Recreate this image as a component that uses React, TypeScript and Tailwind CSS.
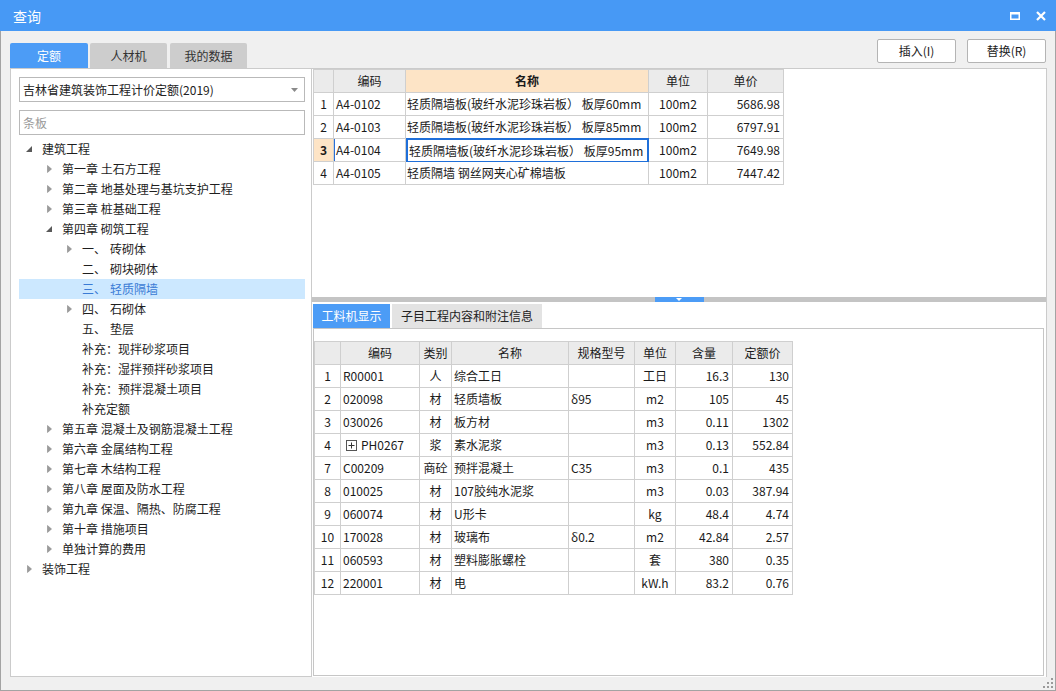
import React from 'react';

type TreeItem = { lvl: number; st?: 'open' | 'closed'; a: string; b?: string; sel?: boolean };

const tree: TreeItem[] = [
  { lvl: 0, st: 'open', a: '建筑工程' },
  { lvl: 1, st: 'closed', a: '第一章 土石方工程' },
  { lvl: 1, st: 'closed', a: '第二章 地基处理与基坑支护工程' },
  { lvl: 1, st: 'closed', a: '第三章 桩基础工程' },
  { lvl: 1, st: 'open', a: '第四章 砌筑工程' },
  { lvl: 2, st: 'closed', a: '一、', b: '砖砌体' },
  { lvl: 2, a: '二、', b: '砌块砌体' },
  { lvl: 2, a: '三、', b: '轻质隔墙', sel: true },
  { lvl: 2, st: 'closed', a: '四、', b: '石砌体' },
  { lvl: 2, a: '五、', b: '垫层' },
  { lvl: 2, a: '补充：现拌砂浆项目' },
  { lvl: 2, a: '补充：湿拌预拌砂浆项目' },
  { lvl: 2, a: '补充：预拌混凝土项目' },
  { lvl: 2, a: '补充定额' },
  { lvl: 1, st: 'closed', a: '第五章 混凝土及钢筋混凝土工程' },
  { lvl: 1, st: 'closed', a: '第六章 金属结构工程' },
  { lvl: 1, st: 'closed', a: '第七章 木结构工程' },
  { lvl: 1, st: 'closed', a: '第八章 屋面及防水工程' },
  { lvl: 1, st: 'closed', a: '第九章 保温、隔热、防腐工程' },
  { lvl: 1, st: 'closed', a: '第十章 措施项目' },
  { lvl: 1, st: 'closed', a: '单独计算的费用' },
  { lvl: 0, st: 'closed', a: '装饰工程' },
];

const topRows = [
  ['1', 'A4-0102', '轻质隔墙板(玻纤水泥珍珠岩板） 板厚60mm', '100m2', '5686.98'],
  ['2', 'A4-0103', '轻质隔墙板(玻纤水泥珍珠岩板） 板厚85mm', '100m2', '6797.91'],
  ['3', 'A4-0104', '轻质隔墙板(玻纤水泥珍珠岩板） 板厚95mm', '100m2', '7649.98'],
  ['4', 'A4-0105', '轻质隔墙 钢丝网夹心矿棉墙板', '100m2', '7447.42'],
];

const lowRows = [
  ['1', 'R00001', '人', '综合工日', '', '工日', '16.3', '130'],
  ['2', '020098', '材', '轻质墙板', 'δ95', 'm2', '105', '45'],
  ['3', '030026', '材', '板方材', '', 'm3', '0.11', '1302'],
  ['4', 'PH0267', '浆', '素水泥浆', '', 'm3', '0.13', '552.84'],
  ['7', 'C00209', '商砼', '预拌混凝土', 'C35', 'm3', '0.1', '435'],
  ['8', '010025', '材', '107胶纯水泥浆', '', 'm3', '0.03', '387.94'],
  ['9', '060074', '材', 'U形卡', '', 'kg', '48.4', '4.74'],
  ['10', '170028', '材', '玻璃布', 'δ0.2', 'm2', '42.84', '2.57'],
  ['11', '060593', '材', '塑料膨胀螺栓', '', '套', '380', '0.35'],
  ['12', '220001', '材', '电', '', 'kW.h', '83.2', '0.76'],
];

function Arrow({ st }: { st?: 'open' | 'closed' }) {
  if (st === 'open')
    return (
      <svg width="6" height="6" viewBox="0 0 6 6">
        <path d="M6 0 L6 6 L0 6 Z" fill="#595959" />
      </svg>
    );
  if (st === 'closed')
    return (
      <svg width="5" height="8" viewBox="0 0 5 8">
        <path d="M0.5 0.5 L4.5 4 L0.5 7.5 Z" fill="#9a9a9a" stroke="#8a8a8a" strokeWidth="0.6" />
      </svg>
    );
  return null;
}

export default function App() {
  return (
    <div className="w-[1056px] h-[691px] flex flex-col font-['Noto_Sans_CJK_SC',sans-serif] text-[12px] text-[#1a1a1a] overflow-hidden">
      {/* Title bar */}
      <div className="h-[31px] shrink-0 bg-[#4799f5] flex items-center pl-[13px] pr-[10px] text-white">
        <span className="text-[14px] leading-none">查询</span>
        <div className="ml-auto flex items-center gap-[16px]">
          <svg width="10" height="8" viewBox="0 0 10 8">
            <rect x="0.75" y="0.75" width="8.5" height="6.5" fill="none" stroke="white" strokeWidth="1.5" />
            <rect x="0" y="0" width="10" height="2.5" fill="white" />
          </svg>
          <svg width="10" height="10" viewBox="0 0 10 10">
            <path d="M1 1 L9 9 M9 1 L1 9" stroke="white" strokeWidth="2.2" />
          </svg>
        </div>
      </div>

      {/* Body */}
      <div className="flex-1 flex flex-col bg-[#f0f0f0] border-x border-b border-[#a3a3a3] relative">
        {/* Header row */}
        <div className="mt-[8px] h-[29px] shrink-0 flex pl-[9px] pr-[9px]">
          <div className="flex items-end gap-[2px]">
            <div className="w-[78px] h-[25px] rounded-t-[2px] bg-[#4c9cf6] text-white flex items-center justify-center">定额</div>
            <div className="w-[77px] h-[25px] rounded-t-[2px] bg-[#cdcdcd] text-[#333] flex items-center justify-center">人材机</div>
            <div className="w-[77px] h-[25px] rounded-t-[2px] bg-[#cdcdcd] text-[#333] flex items-center justify-center ml-[1px]">我的数据</div>
          </div>
          <div className="ml-auto flex items-start gap-[11px]">
            <button className="w-[79px] h-[24px] bg-white border border-[#b4b4b4] rounded-[2px] text-[12px] text-[#222] flex items-center justify-center">插入(I)</button>
            <button className="w-[79px] h-[24px] bg-white border border-[#b4b4b4] rounded-[2px] text-[12px] text-[#222] flex items-center justify-center">替换(R)</button>
          </div>
        </div>

        {/* Main */}
        <div className="h-[609px] shrink-0 flex pl-[9px]">
          {/* Left panel */}
          <div className="w-[302px] shrink-0 bg-white border border-[#cbcbcb] pl-[8px] pr-[6px] pt-[8px] flex flex-col">
            <div className="h-[25px] border border-[#b9b9b9] flex items-center pl-[3px] pr-[6px]">
              <span className="text-[#222]">吉林省建筑装饰工程计价定额(2019)</span>
              <svg className="ml-auto" width="7" height="4" viewBox="0 0 7 4">
                <path d="M0 0 L7 0 L3.5 4 Z" fill="#8a8a8a" />
              </svg>
            </div>
            <div className="mt-[8px] h-[25px] border border-[#b9b9b9] flex items-center pl-[3px]">
              <span className="text-[#9a9a9a]">条板</span>
            </div>
            <div className="mt-[4px] flex flex-col">
              {tree.map((it, i) => (
                <div
                  key={i}
                  className={`h-[20px] flex items-center ${it.sel ? 'bg-[#cce8ff] text-[#3a7bd5]' : 'text-[#1e1e1e]'}`}
                  style={{ paddingLeft: 2 + it.lvl * 20 }}
                >
                  <div className="w-[16px] h-[20px] flex items-center justify-center shrink-0">
                    <Arrow st={it.st} />
                  </div>
                  <div className="ml-[5px] flex items-center leading-none whitespace-nowrap">
                    {it.b ? (
                      <>
                        <span className="w-[28px]">{it.a}</span>
                        <span>{it.b}</span>
                      </>
                    ) : (
                      <span>{it.a}</span>
                    )}
                  </div>
                </div>
              ))}
            </div>
          </div>

          {/* Right panel */}
          <div className="w-[735px] shrink-0 flex flex-col bg-white border-t border-r border-[#cbcbcb]">
            {/* Top table area */}
            <div className="h-[228px] shrink-0 pl-[1px]">
              <div className="flex flex-col w-fit border-l border-t border-[#cfcfcf]">
                <div className="flex h-[23px]">
                  <div className="w-[20px] bg-[#ebebeb] border-r border-b border-[#cfcfcf]" />
                  <div className="w-[72px] bg-[#ebebeb] border-r border-b border-[#cfcfcf] flex items-center justify-center">编码</div>
                  <div className="w-[243px] bg-[#fde4c6] border-r border-b border-[#cfcfcf] flex items-center justify-center font-bold">名称</div>
                  <div className="w-[59px] bg-[#ebebeb] border-r border-b border-[#cfcfcf] flex items-center justify-center">单位</div>
                  <div className="w-[76px] bg-[#ebebeb] border-r border-b border-[#cfcfcf] flex items-center justify-center">单价</div>
                </div>
                {topRows.map((r) => {
                  const sel = r[0] === '3';
                  return (
                    <div key={r[0]} className="flex h-[23px]">
                      <div className={`w-[20px] border-r border-b border-[#cfcfcf] flex items-center justify-center ${sel ? 'bg-[#fde4c6] font-bold' : ''}`}>{r[0]}</div>
                      <div className={`w-[72px] border-r border-b border-[#cfcfcf] flex items-center pl-[2px] whitespace-nowrap ${sel ? 'shadow-[inset_1px_0_0_#2a6fd6]' : ''}`}>{r[1]}</div>
                      <div className={`w-[243px] border-b flex items-center pl-[1px] whitespace-nowrap overflow-hidden ${sel ? 'border-2 border-[#1f6fd9] -mt-[1px] h-[24px]' : 'border-r border-[#cfcfcf]'}`}>{r[2]}</div>
                      <div className="w-[59px] border-r border-b border-[#cfcfcf] flex items-center justify-center">{r[3]}</div>
                      <div className="w-[76px] border-r border-b border-[#cfcfcf] flex items-center justify-end pr-[3px]">{r[4]}</div>
                    </div>
                  );
                })}
              </div>
            </div>

            {/* Splitter */}
            <div className="h-[5px] shrink-0 bg-[#c4c4c4] flex justify-center">
              <div className="w-[49px] h-[5px] bg-[#4c9cf6] flex justify-center items-start pt-[1px]">
                <svg width="6" height="3" viewBox="0 0 6 3">
                  <path d="M0 0 L6 0 L3 3 Z" fill="white" />
                </svg>
              </div>
            </div>

            {/* Lower tabs */}
            <div className="h-[26px] shrink-0 flex items-end pl-[1px] gap-[2px]">
              <div className="w-[77px] h-[24px] bg-[#4c9cf6] text-white flex items-center justify-center">工料机显示</div>
              <div className="w-[150px] h-[24px] bg-[#e3e3e3] text-[#222] flex items-center justify-center">子目工程内容和附注信息</div>
            </div>

            {/* Lower box */}
            <div className="flex-1 ml-[1px] mr-[2px] mb-[1px] border border-[#c6c6c6] pt-[12px]">
              <div className="flex flex-col w-fit border-l border-t border-[#cfcfcf]">
                <div className="flex h-[23px]">
                  <div className="w-[26px] bg-[#ebebeb] border-r border-b border-[#cfcfcf]" />
                  <div className="w-[79px] bg-[#ebebeb] border-r border-b border-[#cfcfcf] flex items-center justify-center">编码</div>
                  <div className="w-[32px] bg-[#ebebeb] border-r border-b border-[#cfcfcf] flex items-center justify-center">类别</div>
                  <div className="w-[117px] bg-[#ebebeb] border-r border-b border-[#cfcfcf] flex items-center justify-center">名称</div>
                  <div className="w-[66px] bg-[#ebebeb] border-r border-b border-[#cfcfcf] flex items-center justify-center">规格型号</div>
                  <div className="w-[41px] bg-[#ebebeb] border-r border-b border-[#cfcfcf] flex items-center justify-center">单位</div>
                  <div className="w-[57px] bg-[#ebebeb] border-r border-b border-[#cfcfcf] flex items-center justify-center">含量</div>
                  <div className="w-[60px] bg-[#ebebeb] border-r border-b border-[#cfcfcf] flex items-center justify-center">定额价</div>
                </div>
                {lowRows.map((r) => (
                  <div key={r[0]} className="flex h-[23px]">
                    <div className="w-[26px] border-r border-b border-[#cfcfcf] flex items-center justify-center">{r[0]}</div>
                    <div className="w-[79px] border-r border-b border-[#cfcfcf] flex items-center pl-[2px] whitespace-nowrap">
                      {r[0] === '4' ? (
                        <>
                          <span className="w-[11px] h-[11px] ml-[3px] mr-[4px] border border-[#555] flex items-center justify-center">
                            <svg width="7" height="7" viewBox="0 0 7 7">
                              <path d="M3.5 0.5 V6.5 M0.5 3.5 H6.5" stroke="#333" strokeWidth="1" />
                            </svg>
                          </span>
                          <span>{r[1]}</span>
                        </>
                      ) : (
                        r[1]
                      )}
                    </div>
                    <div className="w-[32px] border-r border-b border-[#cfcfcf] flex items-center justify-center whitespace-nowrap">{r[2]}</div>
                    <div className="w-[117px] border-r border-b border-[#cfcfcf] flex items-center pl-[2px] whitespace-nowrap">{r[3]}</div>
                    <div className="w-[66px] border-r border-b border-[#cfcfcf] flex items-center pl-[2px] whitespace-nowrap">{r[4]}</div>
                    <div className="w-[41px] border-r border-b border-[#cfcfcf] flex items-center justify-center whitespace-nowrap">{r[5]}</div>
                    <div className="w-[57px] border-r border-b border-[#cfcfcf] flex items-center justify-end pr-[3px]">{r[6]}</div>
                    <div className="w-[60px] border-r border-b border-[#cfcfcf] flex items-center justify-end pr-[3px]">{r[7]}</div>
                  </div>
                ))}
              </div>
            </div>
          </div>
        </div>

        {/* Resize grip */}
        <svg className="absolute right-[2px] bottom-[2px]" width="10" height="10" viewBox="0 0 10 10">
          <rect x="8" y="0" width="2" height="2" fill="#9a9a9a" />
          <rect x="4" y="4" width="2" height="2" fill="#9a9a9a" />
          <rect x="8" y="4" width="2" height="2" fill="#9a9a9a" />
          <rect x="0" y="8" width="2" height="2" fill="#9a9a9a" />
          <rect x="4" y="8" width="2" height="2" fill="#9a9a9a" />
          <rect x="8" y="8" width="2" height="2" fill="#9a9a9a" />
        </svg>
      </div>
    </div>
  );
}
